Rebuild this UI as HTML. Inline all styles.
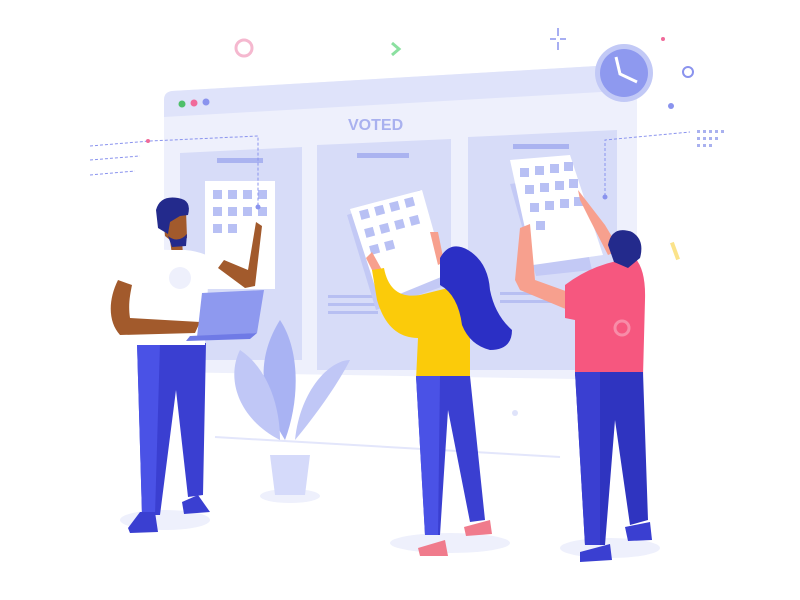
<!DOCTYPE html>
<html><head><style>body{margin:0;background:#fff}svg{display:block}</style></head><body>
<svg width="800" height="600" viewBox="0 0 800 600" xmlns="http://www.w3.org/2000/svg">
<!-- browser -->
<path d="M164,100 Q164,92 172,91 L630,64 Q637,64 637,71 L637,380 L164,372 Z" fill="#eef0fc"/>
<path d="M164,100 Q164,92 172,91 L630,64 Q637,64 637,71 L637,90 L164,117 Z" fill="#dfe3fa"/>
<circle cx="182" cy="104" r="3.5" fill="#4fbf6a"/><circle cx="194" cy="103" r="3.5" fill="#f06a9a"/><circle cx="206" cy="102" r="3.5" fill="#8a93ee"/>
<text x="348" y="130" font-family="Liberation Sans,sans-serif" font-weight="bold" font-size="16" fill="#a9b1ef">VOTED</text>
<path d="M180,153 L302,147 L302,360 L180,360 Z" fill="#d7dcf8"/>
<path d="M317,145 L451,139 L451,370 L317,370 Z" fill="#d7dcf8"/>
<path d="M468,137 L617,130 L617,370 L468,370 Z" fill="#d7dcf8"/>
<rect x="217" y="158" width="46" height="5" fill="#aab3f0"/>
<rect x="357" y="153" width="52" height="5" fill="#aab3f0"/>
<rect x="513" y="144" width="56" height="5" fill="#aab3f0"/>
<rect x="328" y="295" width="60" height="3" fill="#b7bff2"/><rect x="328" y="303" width="55" height="3" fill="#b7bff2"/><rect x="328" y="311" width="50" height="3" fill="#b7bff2"/>
<rect x="500" y="292" width="60" height="3" fill="#b7bff2"/><rect x="500" y="300" width="55" height="3" fill="#b7bff2"/>
<!-- left sheet -->
<rect x="205" y="181" width="70" height="108" fill="#fff"/>
<g fill="#b8c0f4"><rect x="213" y="190" width="9" height="9"/><rect x="228" y="190" width="9" height="9"/><rect x="243" y="190" width="9" height="9"/><rect x="258" y="190" width="9" height="9"/><rect x="213" y="207" width="9" height="9"/><rect x="228" y="207" width="9" height="9"/><rect x="243" y="207" width="9" height="9"/><rect x="258" y="207" width="9" height="9"/><rect x="213" y="224" width="9" height="9"/><rect x="228" y="224" width="9" height="9"/></g>
<!-- middle sheet -->
<polygon points="347,215 420,190 447,285 376,310" fill="#c3c9f5"/>
<polygon points="350,209 422,190 446,275 380,302" fill="#fff"/>
<g fill="#b8c0f4"><rect x="360" y="210" width="9" height="9" transform="rotate(-15 364 214)"/><rect x="375" y="206" width="9" height="9" transform="rotate(-15 379 210)"/><rect x="390" y="202" width="9" height="9" transform="rotate(-15 394 206)"/><rect x="405" y="198" width="9" height="9" transform="rotate(-15 409 202)"/><rect x="365" y="228" width="9" height="9" transform="rotate(-15 369 232)"/><rect x="380" y="224" width="9" height="9" transform="rotate(-15 384 228)"/><rect x="395" y="220" width="9" height="9" transform="rotate(-15 399 224)"/><rect x="410" y="216" width="9" height="9" transform="rotate(-15 414 220)"/><rect x="370" y="245" width="9" height="9" transform="rotate(-15 374 249)"/><rect x="385" y="241" width="9" height="9" transform="rotate(-15 389 245)"/></g>
<!-- right sheet -->
<polygon points="510,184 570,176 592,270 536,276" fill="#c3c9f5"/>
<polygon points="510,160 570,155 603,255 533,265" fill="#fff"/>
<g fill="#b8c0f4"><rect x="520" y="168" width="9" height="9"/><rect x="535" y="166" width="9" height="9"/><rect x="550" y="164" width="9" height="9"/><rect x="564" y="162" width="9" height="9"/><rect x="525" y="185" width="9" height="9"/><rect x="540" y="183" width="9" height="9"/><rect x="555" y="181" width="9" height="9"/><rect x="569" y="179" width="9" height="9"/><rect x="530" y="203" width="9" height="9"/><rect x="545" y="201" width="9" height="9"/><rect x="560" y="199" width="9" height="9"/><rect x="574" y="197" width="9" height="9"/><rect x="536" y="221" width="9" height="9"/></g>
<!-- dashes -->
<path d="M90,146 L150,141 L258,136 L258,205" stroke="#8a93ee" stroke-dasharray="3 2" fill="none"/>
<path d="M90,160 L140,156 M90,175 L135,171" stroke="#8a93ee" stroke-dasharray="3 2"/>
<path d="M605,196 L605,140 L690,132" stroke="#8a93ee" stroke-dasharray="3 2" fill="none"/>
<circle cx="258" cy="207" r="2.5" fill="#8a93ee"/><circle cx="605" cy="197" r="2.5" fill="#8a93ee"/><circle cx="148" cy="141" r="2" fill="#f06a9a"/>
<!-- decor -->
<circle cx="244" cy="48" r="8" fill="none" stroke="#f5b8cf" stroke-width="3"/>
<path d="M392,43 l7,6 l-7,6" stroke="#8be0a0" stroke-width="3" fill="none"/>
<circle cx="624" cy="73" r="29" fill="#c2c9f6"/><circle cx="624" cy="73" r="24" fill="#8e99ef"/>
<path d="M616,57 L620,74 L637,82" stroke="#fff" stroke-width="3" fill="none"/>
<circle cx="688" cy="72" r="5" fill="none" stroke="#8a93ee" stroke-width="2"/>
<circle cx="663" cy="39" r="2" fill="#f06a9a"/><circle cx="671" cy="106" r="3" fill="#8a93ee"/>
<g fill="#a9b1ef"><rect x="697" y="130" width="3" height="3"/><rect x="703" y="130" width="3" height="3"/><rect x="709" y="130" width="3" height="3"/><rect x="715" y="130" width="3" height="3"/><rect x="721" y="130" width="3" height="3"/><rect x="697" y="137" width="3" height="3"/><rect x="703" y="137" width="3" height="3"/><rect x="709" y="137" width="3" height="3"/><rect x="715" y="137" width="3" height="3"/><rect x="697" y="144" width="3" height="3"/><rect x="703" y="144" width="3" height="3"/><rect x="709" y="144" width="3" height="3"/></g>
<rect x="673" y="242" width="4" height="18" fill="#fbe38a" transform="rotate(-20 675 251)"/>
<path d="M558,28 v8 M558,42 v8 M550,39 h6 M560,39 h6" stroke="#8a93ee" stroke-width="1.5"/>
<line x1="215" y1="437" x2="560" y2="457" stroke="#e3e6fb" stroke-width="2"/>
<circle cx="515" cy="413" r="3" fill="#dfe3fa"/>
<!-- shadows -->
<ellipse cx="165" cy="520" rx="45" ry="10" fill="#eef0fc"/>
<ellipse cx="450" cy="543" rx="60" ry="10" fill="#eef0fc"/>
<ellipse cx="610" cy="548" rx="50" ry="10" fill="#eef0fc"/>
<ellipse cx="290" cy="496" rx="30" ry="7" fill="#eef0fc"/>
<!-- plant -->
<path d="M285,440 C260,400 255,360 280,320 C300,350 300,400 285,440Z" fill="#a9b3f3"/>
<path d="M280,440 C240,420 225,380 240,350 C270,370 280,410 280,440Z" fill="#c0c7f6"/>
<path d="M295,440 C320,410 340,380 350,360 C330,360 300,390 295,440Z" fill="#c0c7f6"/>
<path d="M270,455 L310,455 L305,495 L275,495 Z" fill="#d5dafa"/>
<!-- man left -->
<path d="M137,343 L206,343 L203,495 L188,497 L176,390 L160,515 L142,515 Z" fill="#3a3fd1"/>
<path d="M137,343 L160,343 L155,515 L142,515Z" fill="#4a52e6"/>
<path d="M128,528 L140,512 L155,512 L158,532 L130,533Z M182,502 L198,495 L210,512 L184,514Z" fill="#3a3fd1"/>
<path d="M170,240 L182,240 L183,255 L172,255Z" fill="#a25a2c"/>
<path d="M118,262 Q140,248 170,250 L185,250 Q210,252 225,268 L220,285 L208,285 L205,345 L137,345 L135,305 L118,300 Z" fill="#fff"/>
<circle cx="180" cy="278" r="11" fill="#eef0fc"/>
<path d="M118,280 C108,300 108,322 120,335 L195,333 L200,322 L130,318 C128,305 130,295 132,285Z" fill="#a25a2c"/>
<path d="M218,268 L245,288 L255,286 L262,226 L256,222 L248,270 L224,260Z" fill="#a25a2c"/>
<path d="M162,205 Q176,196 186,210 L187,238 L175,244 L165,236Z" fill="#a25a2c"/>
<path d="M156,210 Q160,195 178,198 Q192,200 188,215 L180,216 L170,222 L168,234 L158,228Z" fill="#232a8c"/>
<path d="M168,236 Q178,244 187,234 L186,246 L172,247Z" fill="#232a8c"/>
<polygon points="202,293 264,290 257,333 197,337" fill="#8e99ef"/>
<polygon points="190,336 257,333 250,339 186,341" fill="#6f7ae6"/>
<!-- woman -->
<path d="M366,258 l6,-6 l10,18 l-8,4Z M430,232 l8,0 l6,30 l-6,3Z" fill="#f7a08e"/>
<path d="M372,270 L384,268 Q390,300 420,295 L448,288 Q468,300 470,325 L470,380 L416,380 L418,338 Q388,338 377,300Z" fill="#fbcb0a"/>
<path d="M416,376 L470,376 L485,520 L470,522 L448,410 L440,535 L425,535 Z" fill="#3a3fd1"/>
<path d="M416,376 L440,376 L438,535 L425,535Z" fill="#4a52e6"/>
<path d="M418,548 L445,540 L448,556 L420,556Z M464,527 L490,520 L492,534 L466,536Z" fill="#f07b8c"/>
<path d="M440,258 Q450,240 468,250 Q488,262 490,290 Q495,315 512,330 Q512,350 490,350 Q470,345 462,325 Q458,295 440,285Z" fill="#2b2fc5"/>
<!-- right man -->
<path d="M520,228 L530,224 L535,280 L585,298 L580,315 L520,290 L515,280Z M578,190 L605,225 L620,250 L608,255 L590,220 L580,200Z" fill="#f7a08e"/>
<path d="M565,285 Q595,262 635,258 Q646,270 645,300 L643,376 L575,376 L575,320 L565,318Z" fill="#f6577f"/>
<path d="M575,372 L643,372 L648,520 L630,525 L615,420 L605,545 L585,545 Z" fill="#2f34c0"/>
<path d="M575,372 L600,372 L600,545 L585,545Z" fill="#3a3fd1"/>
<path d="M580,552 L610,544 L612,560 L580,562Z M625,527 L650,522 L652,540 L628,541Z" fill="#3a3fd1"/>
<circle cx="622" cy="328" r="7" fill="none" stroke="#f88ca8" stroke-width="3"/>
<path d="M608,245 Q612,225 632,232 Q645,240 640,258 L628,268 L614,262Z" fill="#232a8c"/>
</svg>
</body></html>
